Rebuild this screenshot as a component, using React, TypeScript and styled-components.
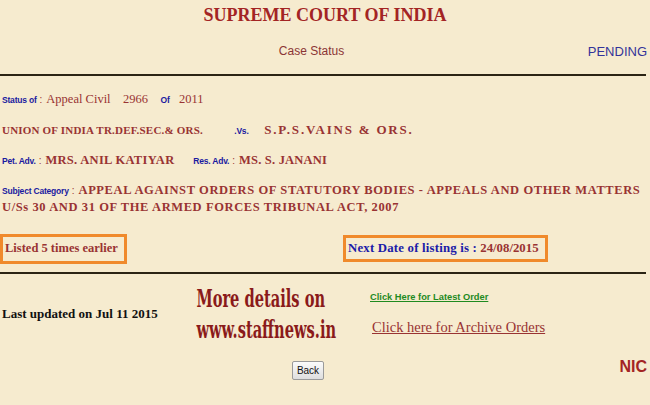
import React from "react"
import styled, { createGlobalStyle } from "styled-components"

const Global = createGlobalStyle`
  html, body {
    margin: 0;
    padding: 0;
    background: #f6ebcf;
  }
  body {
    font-family: "Liberation Serif", serif;
    width: 650px;
    height: 405px;
    overflow: hidden;
  }
`

const Page = styled.div`
  width: 650px;
  height: 405px;
  background: #f6ebcf;
`

const Title = styled.h1`
  margin: 0;
  padding-top: 4px;
  height: 26px;
  text-align: center;
  font-family: "Liberation Serif", serif;
  font-size: 18px;
  font-weight: bold;
  color: #a32424;
  line-height: 22px;
`

const SubHead = styled.div`
  display: grid;
  grid-template-columns: 1fr auto 1fr;
  align-items: center;
  height: 42px;
  padding-right: 3px;
  font-family: "Liberation Sans", Arial, sans-serif;
  font-size: 12px;
`

const CaseStatus = styled.span`
  grid-column: 2;
  color: #8b3535;
  margin-right: 24px;
`

const Pending = styled.span`
  grid-column: 3;
  justify-self: end;
  color: #33339a;
  font-size: 13px;
`

const Rule = styled.hr<{ $top?: number }>`
  margin: ${p => p.$top ?? 2}px 4px 0 0;
  border: 0;
  height: 2px;
  background: #2b2414;
`

const Details = styled.div`
  padding: 15px 0 0 2px;
  display: flex;
  flex-direction: column;
`

const Row = styled.div<{ $gap?: number }>`
  margin-top: ${p => p.$gap ?? 0}px;
  color: #993333;
  font-size: 12.5px;
  line-height: 17px;
  white-space: nowrap;
`

const Wrap = styled(Row)`
  white-space: normal;
`

const Caps = styled.span<{ $size?: number; $spacing?: number }>`
  font-weight: bold;
  font-size: ${p => p.$size ?? 12.5}px;
  letter-spacing: ${p => p.$spacing ?? 0.6}px;
`

const Label = styled.span<{ $gap?: number }>`
  display: inline-block;
  margin-right: ${p => p.$gap ?? 0}px;
  line-height: 1;
  font-family: "Liberation Sans Narrow", "Liberation Sans", Arial, sans-serif;
  font-stretch: condensed;
  font-size: 8.5px;
  font-weight: bold;
  color: #1a1aa0;
  letter-spacing: -0.2px;
`

const Colon = styled.span`
  display: inline-block;
  margin-right: 4px;
  line-height: 1;
  color: #993333;
  font-family: "Liberation Sans", sans-serif;
  font-size: 10px;
`

const Boxes = styled.div`
  display: grid;
  grid-template-columns: 343px auto;
  align-items: center;
  margin-top: 16px;
  height: 33px;
`

const Framed = styled.div<{ $h: number; $size?: number }>`
  justify-self: start;
  border: 3px solid #f08a2c;
  padding: 0 6px 0 2px;
  height: ${p => p.$h}px;
  display: flex;
  align-items: center;
  font-size: ${p => p.$size ?? 12.5}px;
  font-weight: bold;
`

const Red = styled.span`
  color: #993333;
`

const Blue = styled.span`
  color: #1c1ca8;
  letter-spacing: 0.2px;
`

const Footer = styled.div`
  display: grid;
  grid-template-columns: 190px 150px 1fr;
  padding-top: 9px;
  height: 62px;
`

const Updated = styled.div`
  padding: 23px 0 0 2px;
  font-size: 13px;
  line-height: 15px;
  font-weight: bold;
  color: #111;
  white-space: nowrap;
`

const Promo = styled.div`
  text-align: center;
  font-family: "DejaVu Serif Condensed", "DejaVu Serif", serif;
  font-stretch: condensed;
  font-weight: bold;
  font-size: 25px;
  line-height: 31px;
  color: #8a1a1a;
  transform: scaleX(0.65);
  transform-origin: 50% 0;
  white-space: nowrap;
  margin-left: -24px;
`

const Links = styled.div`
  display: flex;
  flex-direction: column;
  align-items: flex-start;
  padding-left: 30px;
`

const Latest = styled.a`
  margin-top: 8px;
  line-height: 12px;
  font-family: "Liberation Sans Narrow", "Liberation Sans", Arial, sans-serif;
  font-stretch: condensed;
  font-size: 9.3px;
  font-weight: bold;
  color: #1f8a1f;
  text-decoration: underline;
`

const Archive = styled.a`
  margin: 16px 0 0 2px;
  line-height: 17px;
  font-size: 14.5px;
  color: #993333;
  text-decoration: underline;
  white-space: nowrap;
`

const Bottom = styled.div`
  display: grid;
  grid-template-columns: 1fr auto 1fr;
  align-items: center;
  padding: 16px 3px 0 0;
`

const BackButton = styled.button`
  grid-column: 2;
  margin-right: 31px;
  height: 19px;
  padding: 0 4px;
  font-family: "Liberation Sans", Arial, sans-serif;
  font-size: 10px;
  color: #111;
  background: linear-gradient(#fbfbfb, #dedede);
  border: 1px solid #9a9a9a;
  border-radius: 2px;
`

const Nic = styled.span`
  grid-column: 3;
  justify-self: end;
  margin-top: -8px;
  font-family: "Liberation Sans", Arial, sans-serif;
  font-weight: bold;
  font-size: 16px;
  color: #a32424;
`

export default function App() {
  return (
    <Page>
      <Global />
      <Title>SUPREME COURT OF INDIA</Title>
      <SubHead>
        <CaseStatus>Case Status</CaseStatus>
        <Pending>PENDING</Pending>
      </SubHead>
      <Rule />
      <Details>
        <Row>
          <Label $gap={3}>Status of</Label>
          <Colon>:</Colon>Appeal Civil&nbsp;&nbsp;&nbsp; 2966&nbsp;&nbsp;&nbsp; <Label>Of</Label>&nbsp;&nbsp; 2011
        </Row>
        <Row $gap={13}>
          <Caps $size={11} $spacing={0.2}>UNION OF INDIA TR.DEF.SEC.&amp; ORS.</Caps>
          &nbsp;&nbsp;&nbsp;&nbsp;&nbsp;&nbsp;&nbsp;&nbsp;&nbsp;&nbsp;<Label>.Vs.</Label>&nbsp;&nbsp;&nbsp;&nbsp;&nbsp;
          <Caps $size={13} $spacing={1.8}>S.P.S.VAINS &amp; ORS.</Caps>
        </Row>
        <Row $gap={13}>
          <Label $gap={3}>Pet. Adv.</Label>
          <Colon>:</Colon>
          <Caps $spacing={0.3}>MRS. ANIL KATIYAR</Caps>&nbsp;&nbsp;&nbsp;&nbsp;&nbsp;&nbsp;
          <Label $gap={3}>Res. Adv.</Label>
          <Colon>:</Colon>
          <Caps $spacing={0.2}>MS. S. JANANI</Caps>
        </Row>
        <Wrap $gap={13}>
          <Label $gap={3}>Subject Category</Label>
          <Colon>:</Colon>
          <Caps>
            APPEAL AGAINST ORDERS OF STATUTORY BODIES - APPEALS AND OTHER MATTERS U/Ss 30 AND 31 OF THE ARMED FORCES
            TRIBUNAL ACT, 2007
          </Caps>
        </Wrap>
      </Details>
      <Boxes>
        <Framed $h={24}>
          <Red>Listed 5 times earlier</Red>
        </Framed>
        <Framed $h={21} $size={12.8}>
          <Blue>Next Date of listing is :</Blue>&nbsp;<Red>24/08/2015</Red>
        </Framed>
      </Boxes>
      <Rule $top={7} />
      <Footer>
        <Updated>Last updated on Jul 11 2015</Updated>
        <Promo>
          More details on
          <br />
          www.staffnews.in
        </Promo>
        <Links>
          <Latest href="#">Click Here for Latest Order</Latest>
          <Archive href="#">Click here for Archive Orders</Archive>
        </Links>
      </Footer>
      <Bottom>
        <BackButton>Back</BackButton>
        <Nic>NIC</Nic>
      </Bottom>
    </Page>
  )
}
